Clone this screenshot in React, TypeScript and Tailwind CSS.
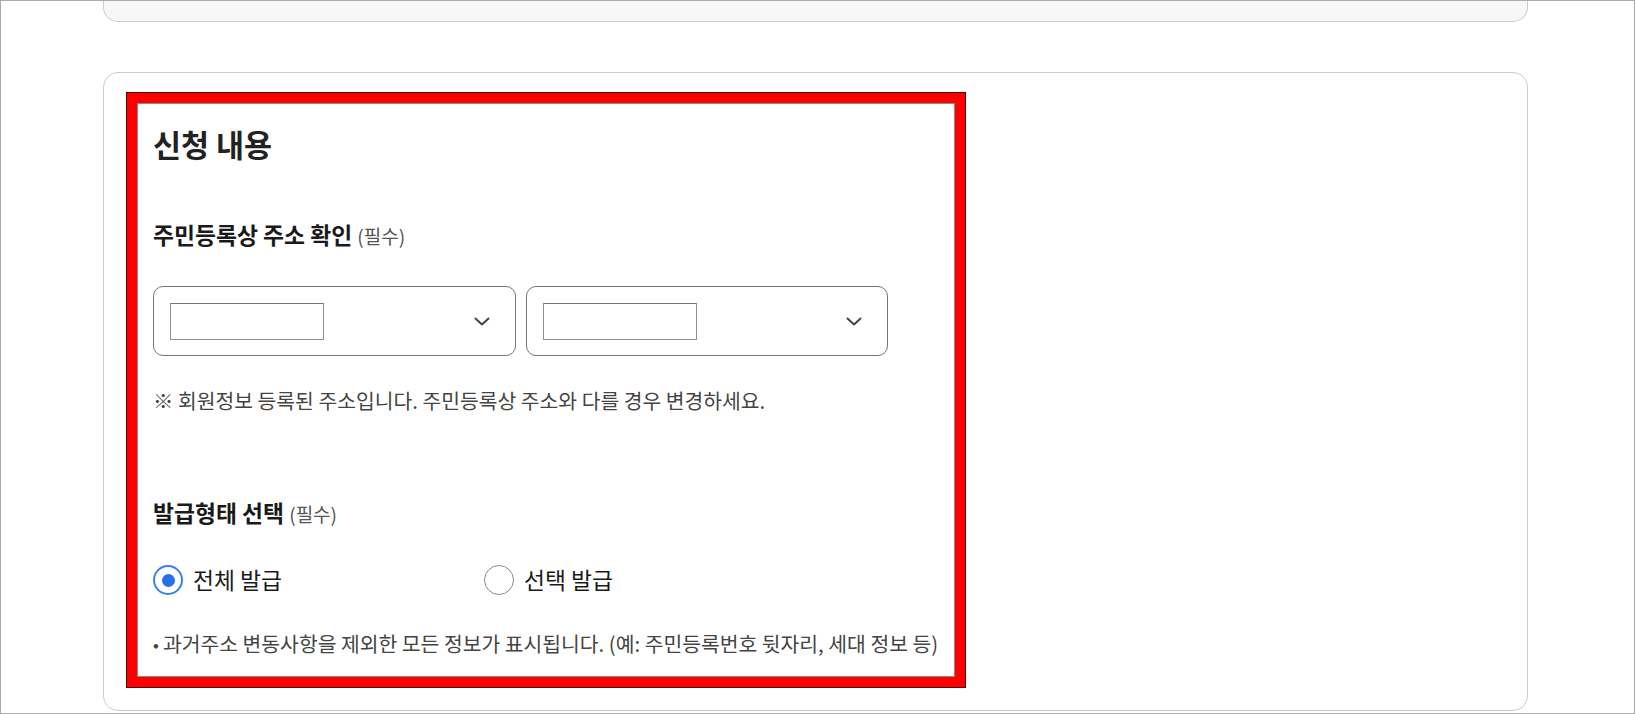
import { useState } from 'react';

const font = { fontFamily: '"Noto Sans CJK KR", "Noto Sans", sans-serif' };

function Chevron() {
  return (
    <svg width="16" height="9" viewBox="0 0 16 9" fill="none">
      <path d="M1.5 1.5 L8 7.5 L14.5 1.5" stroke="#444" strokeWidth="2" strokeLinecap="round" strokeLinejoin="round" />
    </svg>
  );
}

function SelectBox({ width }: { width: string }) {
  return (
    <div className={`${width} h-[70px] border border-[#767676] rounded-[10px] flex items-center justify-between pl-[16px] pr-[25px] bg-white`}>
      <div className="w-[154px] h-[37px] border border-[#8f8f8f] border-t-[#767676] bg-white" />
      <Chevron />
    </div>
  );
}

function Radio({ checked, label, onClick, className }: { checked: boolean; label: string; onClick: () => void; className?: string }) {
  return (
    <button type="button" onClick={onClick} className={`flex items-center gap-[10px] ${className ?? ''}`}>
      <span
        className={`w-[30px] h-[30px] rounded-full flex items-center justify-center bg-white ${
          checked ? 'border-2 border-[#3b7ff0]' : 'border-[1.5px] border-[#8a8a8a]'
        }`}
      >
        {checked && <span className="w-[13px] h-[13px] rounded-full bg-[#2a6fe6]" />}
      </span>
      <span className="text-[22.8px] leading-[30px] text-[#1a1a1a]">{label}</span>
    </button>
  );
}

export default function App() {
  const [type, setType] = useState<'all' | 'select'>('all');

  return (
    <div className="w-[1635px] h-[714px] border border-[#ababab] bg-white overflow-hidden" style={font}>
      <div className="ml-[102px] w-[1425px] h-[21px] border border-t-0 border-[#cccccc] rounded-b-[15px] bg-[#f7f7f7]" />

      <div className="ml-[102px] mt-[50px] w-[1425px] h-[639px] border border-[#cccccc] rounded-[15px] bg-white pl-[22px] pt-[19px]">
        <div className="w-[840px] h-[596px] border border-[#4a0000] bg-[#ff0000] p-[10px]">
          <div className="h-full border border-[#8a8a8a] bg-white pl-[15px] pt-[22px]">
            <h2 className="text-[30.5px] leading-[36px] font-bold text-[#222]">신청 내용</h2>

            <div className="mt-[58px] text-[22.8px] leading-[30px] font-bold text-[#1a1a1a]">
              주민등록상 주소 확인 <span className="text-[19px] font-normal text-[#555]">(필수)</span>
            </div>

            <div className="mt-[35px] flex gap-[10px]">
              <SelectBox width="w-[363px]" />
              <SelectBox width="w-[362px]" />
            </div>

            <p className="mt-[30px] text-[20.4px] leading-[28px] text-[#444]">
              ※ 회원정보 등록된 주소입니다. 주민등록상 주소와 다를 경우 변경하세요.
            </p>

            <div className="mt-[84px] text-[22.8px] leading-[30px] font-bold text-[#1a1a1a]">
              발급형태 선택 <span className="text-[19px] font-normal text-[#555]">(필수)</span>
            </div>

            <div className="mt-[36px] flex items-center">
              <Radio checked={type === 'all'} label="전체 발급" onClick={() => setType('all')} className="w-[331px]" />
              <Radio checked={type === 'select'} label="선택 발급" onClick={() => setType('select')} />
            </div>

            <p className="mt-[34px] flex items-center text-[20.4px] leading-[28px] text-[#444]">
              <span className="w-[10px] text-[17px] leading-none text-[#444]">•</span>
              과거주소 변동사항을 제외한 모든 정보가 표시됩니다. (예: 주민등록번호 뒷자리, 세대 정보 등)
            </p>
          </div>
        </div>
      </div>
    </div>
  );
}
